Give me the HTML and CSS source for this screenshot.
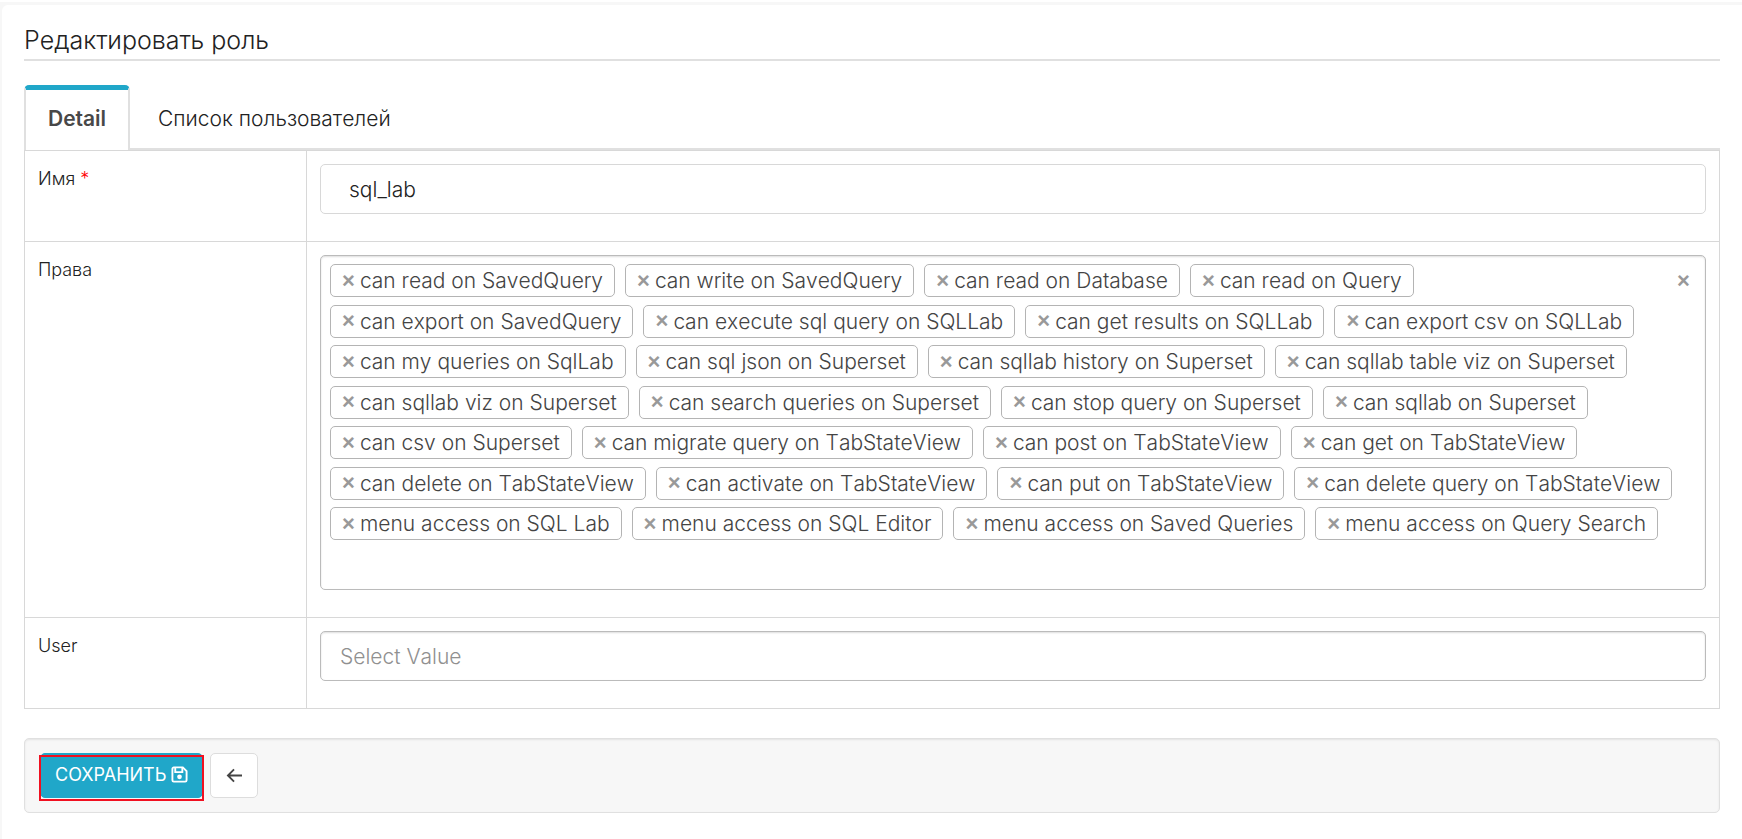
FILE: index.html
```html
<!DOCTYPE html>
<html lang="ru">
<head>
<meta charset="utf-8">
<title>Редактировать роль</title>
<link rel="stylesheet" href="styles.css">
</head>
<body>

<div class="panel">
  <h1 class="title">Редактировать роль</h1>

  <nav class="tabs">
    <a class="tab active" href="#detail">Detail</a>
    <a class="tab" href="#users">Список пользователей</a>
  </nav>

  <form>
    <table class="form-table" id="detail">
      <tr>
        <th><label for="name">Имя <span class="required">*</span></label></th>
        <td><input class="form-control" type="text" id="name" value="sql_lab"></td>
      </tr>
      <tr>
        <th><label for="permissions">Права</label></th>
        <td>
          <div class="multi">
            <ul class="choices">
              <li class="choice"><button type="button" class="remove">×</button>can read on SavedQuery</li>
              <li class="choice"><button type="button" class="remove">×</button>can write on SavedQuery</li>
              <li class="choice"><button type="button" class="remove">×</button>can read on Database</li>
              <li class="choice"><button type="button" class="remove">×</button>can read on Query</li>
              <li class="choice"><button type="button" class="remove">×</button>can export on SavedQuery</li>
              <li class="choice"><button type="button" class="remove">×</button>can execute sql query on SQLLab</li>
              <li class="choice"><button type="button" class="remove">×</button>can get results on SQLLab</li>
              <li class="choice"><button type="button" class="remove">×</button>can export csv on SQLLab</li>
              <li class="choice"><button type="button" class="remove">×</button>can my queries on SqlLab</li>
              <li class="choice"><button type="button" class="remove">×</button>can sql json on Superset</li>
              <li class="choice"><button type="button" class="remove">×</button>can sqllab history on Superset</li>
              <li class="choice"><button type="button" class="remove">×</button>can sqllab table viz on Superset</li>
              <li class="choice"><button type="button" class="remove">×</button>can sqllab viz on Superset</li>
              <li class="choice"><button type="button" class="remove">×</button>can search queries on Superset</li>
              <li class="choice"><button type="button" class="remove">×</button>can stop query on Superset</li>
              <li class="choice"><button type="button" class="remove">×</button>can sqllab on Superset</li>
              <li class="choice"><button type="button" class="remove">×</button>can csv on Superset</li>
              <li class="choice"><button type="button" class="remove">×</button>can migrate query on TabStateView</li>
              <li class="choice"><button type="button" class="remove">×</button>can post on TabStateView</li>
              <li class="choice"><button type="button" class="remove">×</button>can get on TabStateView</li>
              <li class="choice"><button type="button" class="remove">×</button>can delete on TabStateView</li>
              <li class="choice"><button type="button" class="remove">×</button>can activate on TabStateView</li>
              <li class="choice"><button type="button" class="remove">×</button>can put on TabStateView</li>
              <li class="choice"><button type="button" class="remove">×</button>can delete query on TabStateView</li>
              <li class="choice"><button type="button" class="remove">×</button>menu access on SQL Lab</li>
              <li class="choice"><button type="button" class="remove">×</button>menu access on SQL Editor</li>
              <li class="choice"><button type="button" class="remove">×</button>menu access on Saved Queries</li>
              <li class="choice"><button type="button" class="remove">×</button>menu access on Query Search</li>
            </ul>
            <button type="button" class="remove clear">×</button>
            <input class="search" type="text" id="permissions">
          </div>
        </td>
      </tr>
      <tr>
        <th><label for="user">User</label></th>
        <td><input class="form-control select" type="text" id="user" placeholder="Select Value"></td>
      </tr>
    </table>

    <div class="well">
      <div class="highlight">
        <button type="submit" class="btn btn-primary">СОХРАНИТЬ
          <svg class="icon-save" viewBox="0 0 18 18" fill="none" stroke="currentColor" stroke-width="2">
            <path d="M3 1.500H12.500L16.500 5.500V15a1.500 1.500 0 0 1-1.500 1.500H3A1.500 1.500 0 0 1 1.500 15V3A1.500 1.500 0 0 1 3 1.500z"/>
            <path d="M4.500 1.500V6.500H12V1.500"/>
            <circle cx="9" cy="11.500" r="2.500" fill="currentColor" stroke="none"/>
          </svg>
        </button>
      </div>
      <a class="btn btn-back" href="#back" aria-label="Back">
        <svg class="icon-back" viewBox="0 0 18 16" fill="none" stroke="currentColor" stroke-width="2">
          <path d="M17 8H2M8.500 1.500L2 8l6.500 6.500"/>
        </svg>
      </a>
    </div>
  </form>
</div>

</body>
</html>
```
FILE: styles.css
```css
* {
    box-sizing: border-box;
}

body {
    margin: 0;
    padding: 5px 0 0 2px;
    background: linear-gradient(#fff 2px, #f7f7f7 2px);
    font-family: Inter, "Liberation Sans", sans-serif;
    font-size: 21px;
    font-weight: 300;
    font-kerning: none;
    color: #222;
}

.panel {
    min-height: calc(100vh - 5px);
    padding: 19px 22px;
    background-color: #fff;
    border-top-left-radius: 6px;
}

.title {
    margin: 0 0 24px;
    padding-bottom: 3px;
    border-bottom: 2px solid #e0e0e0;
    font-size: 25px;
    font-weight: 300;
    line-height: 32px;
}

/* Tabs */
.tabs {
    display: flex;
    height: 65px;
    border-bottom: 2px solid #e0e0e0;
}

.tab {
    padding: 20px 24px 0 26px;
    border: 2px solid transparent;
    border-bottom: none;
    line-height: 24px;
    color: #222;
    text-decoration: none;
}

.tab.active {
    height: 65px;
    padding: 17px 22px 0;
    border-color: #e0e0e0;
    border-top: 5px solid #20a7c9;
    border-radius: 5px 5px 0 0;
    background-color: #fff;
    font-weight: 600;
    color: #484848;
}

/* Form */
.form-table {
    width: 100%;
    border-collapse: collapse;
}

.form-table th,
.form-table td {
    border: 1px solid #d8d8d8;
    padding: 13px 13px 27px;
    vertical-align: top;
}

.form-table th {
    width: 282px;
    padding-top: 16px;
    font-size: 18px;
    font-weight: 300;
    line-height: 24px;
    text-align: left;
}

.required {
    color: #f00;
}

.form-control {
    display: block;
    width: 100%;
    height: 50px;
    padding: 0 28px;
    border: 1px solid #d8d8d8;
    border-radius: 5px;
    background-color: #fff;
    font: inherit;
    font-kerning: none;
    color: #222;
}

.form-control.select {
    padding: 0 19px;
    border-color: #bbb;
    box-shadow: inset 0 1px 2px #ddd;
}

.form-control::placeholder {
    color: #909090;
    opacity: 1;
}

/* Multiple select */
.multi {
    display: grid;
    grid-template-columns: 1fr auto;
    padding: 8px 10px 8px 9px;
    border: 1px solid #bbb;
    border-radius: 5px;
    box-shadow: inset 0 1px 2px #ddd;
}

.choices {
    display: flex;
    flex-wrap: wrap;
    align-content: space-between;
    column-gap: 10px;
    min-height: 276px;
    margin: 0;
    padding: 0;
    list-style: none;
}

.choice {
    display: flex;
    align-items: center;
    height: 33px;
    padding: 0 11px;
    border: 1px solid #b4b4b4;
    border-radius: 5px;
    color: #444;
    white-space: nowrap;
}

.remove {
    width: 18px;
    padding: 0;
    border: none;
    background: none;
    font: bold 22px "Liberation Sans", sans-serif;
    color: #999;
    text-align: left;
    cursor: pointer;
}

.remove.clear {
    align-self: start;
    height: 33px;
}

.search {
    grid-column: 1 / 3;
    height: 41px;
    border: none;
    outline: none;
    background: none;
    font: inherit;
}

/* Buttons */
.well {
    display: flex;
    align-items: flex-start;
    gap: 7px;
    margin-top: 29px;
    padding: 14px 15px;
    border: 1px solid #e0e0e0;
    border-radius: 5px;
    background-color: #f7f7f7;
    box-shadow: inset 0 1px 2px #e3e3e3;
}

.btn {
    display: flex;
    align-items: center;
    justify-content: center;
    height: 45px;
    border: 1px solid #ddd;
    border-radius: 5px;
    cursor: pointer;
}

.btn-primary {
    gap: 5px;
    padding: 0 14px 2px;
    border-color: #20a7c9;
    background-color: #20a7c9;
    font: 400 18px Inter, "Liberation Sans", sans-serif;
    color: #fff;
}

/* Red frame around the save button */
.highlight {
    position: relative;
}

.highlight::after {
    content: "";
    position: absolute;
    top: 2px;
    right: -1px;
    bottom: -3px;
    left: -1px;
    border: 2px solid #f01020;
    pointer-events: none;
}

.btn-back {
    width: 48px;
    background-color: #fff;
    color: #444;
}

.icon-save {
    width: 17px;
    height: 17px;
}

.icon-back {
    width: 17px;
    height: 15px;
}
```
